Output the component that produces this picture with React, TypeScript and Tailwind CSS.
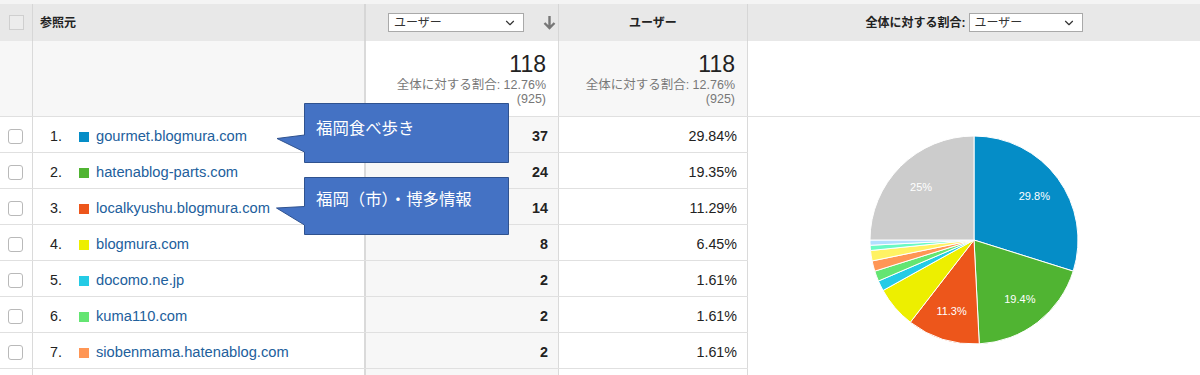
import { ChevronDown } from 'lucide-react';

const rows = [
  { n: 1, name: 'gourmet.blogmura.com', color: '#058dc7', users: '37', pct: '29.84%' },
  { n: 2, name: 'hatenablog-parts.com', color: '#50b432', users: '24', pct: '19.35%' },
  { n: 3, name: 'localkyushu.blogmura.com', color: '#ed561b', users: '14', pct: '11.29%' },
  { n: 4, name: 'blogmura.com', color: '#edef00', users: '8', pct: '6.45%' },
  { n: 5, name: 'docomo.ne.jp', color: '#24cbe5', users: '2', pct: '1.61%' },
  { n: 6, name: 'kuma110.com', color: '#64e572', users: '2', pct: '1.61%' },
  { n: 7, name: 'siobenmama.hatenablog.com', color: '#ff9655', users: '2', pct: '1.61%' },
];

const slices = [
  { v: 37, color: '#058dc7', label: '29.8%' },
  { v: 24, color: '#50b432', label: '19.4%' },
  { v: 14, color: '#ed561b', label: '11.3%' },
  { v: 8, color: '#edef00' },
  { v: 2, color: '#24cbe5' },
  { v: 2, color: '#64e572' },
  { v: 2, color: '#ff9655' },
  { v: 2, color: '#fff263' },
  { v: 1, color: '#6af9c4' },
  { v: 1, color: '#b2deff' },
  { v: 31, color: '#cccccc', label: '25%' },
];

function Select({ width }: { width: string }) {
  return (
    <div className={`${width} h-[19px] bg-white border border-[#a9a9a9] flex items-center justify-between pl-[5px] pr-[6px]`}>
      <span className="text-[12px] leading-none text-[#333]">ユーザー</span>
      <ChevronDown className="w-[14px] h-[14px] text-[#333]" strokeWidth={2} />
    </div>
  );
}

function Pie() {
  const total = slices.reduce((s, x) => s + x.v, 0);
  const cx = 106;
  const cy = 106;
  const r = 104;
  let acc = 0;
  const pt = (frac: number, rad: number) => {
    const a = frac * Math.PI * 2;
    return [cx + Math.sin(a) * rad, cy - Math.cos(a) * rad];
  };
  return (
    <svg width="212" height="212" viewBox="0 0 212 212">
      {slices.map((s, i) => {
        const start = acc / total;
        acc += s.v;
        const end = acc / total;
        const [x1, y1] = pt(start, r);
        const [x2, y2] = pt(end, r);
        const large = end - start > 0.5 ? 1 : 0;
        return (
          <path
            key={i}
            d={`M${cx} ${cy} L${x1} ${y1} A${r} ${r} 0 ${large} 1 ${x2} ${y2} Z`}
            fill={s.color}
            stroke="#ffffff"
            strokeWidth="1"
          />
        );
      })}
      {(() => {
        let a2 = 0;
        return slices.map((s, i) => {
          const mid = (a2 + s.v / 2) / total;
          a2 += s.v;
          if (!s.label) return null;
          const [lx, ly] = pt(mid, r * 0.72);
          return (
            <text
              key={'l' + i}
              x={lx}
              y={ly}
              textAnchor="middle"
              dominantBaseline="central"
              fill="#ffffff"
              fontSize="11"
              fontFamily="Liberation Sans, Arial, sans-serif"
            >
              {s.label}
            </text>
          );
        });
      })()}
    </svg>
  );
}

export default function App() {
  return (
    <div className="relative w-[1200px] h-[375px] overflow-hidden bg-white font-['Liberation_Sans','Noto_Sans_CJK_JP',sans-serif] text-[#222]">
      <div className="h-[4px] bg-[#f4f4f4]"></div>

      {/* Header */}
      <div className="grid grid-cols-[33px_333px_193px_189px_1fr] h-[37px] bg-[#e8e8e8]">
        <div className="border-r border-[#d6d6d6] flex items-center pl-[9px]">
          <div className="w-[15px] h-[15px] border border-[#cfcfcf] bg-[#ececec]"></div>
        </div>
        <div className="border-r-2 border-[#d6d6d6] flex items-center pl-[7px] text-[12px] font-bold">参照元</div>
        <div className="border-r border-[#d6d6d6] flex items-center pl-[22px]">
          <Select width="w-[136px]" />
          <svg className="ml-[19px]" width="13" height="15" viewBox="0 0 13 15">
            <path d="M6.5 1V13M1.5 8L6.5 13L11.5 8" fill="none" stroke="#777" strokeWidth="2.4" />
          </svg>
        </div>
        <div className="border-r border-[#d6d6d6] flex items-center justify-center text-[12px] font-bold">ユーザー</div>
        <div className="flex items-center justify-center">
          <span className="text-[12px] font-bold mr-[3px]">全体に対する割合:</span>
          <Select width="w-[114px]" />
        </div>
      </div>

      {/* Summary */}
      <div className="grid grid-cols-[33px_333px_193px_189px_1fr] h-[76px] border-b border-[#e0e0e0]">
        <div className="border-r border-[#dadada] bg-[#f7f7f7]"></div>
        <div className="border-r-2 border-[#dadada] bg-[#f7f7f7]"></div>
        <div className="border-r border-[#dadada] bg-white flex flex-col items-end pr-[12px] pt-[10px]">
          <span className="text-[23px] leading-[26px] text-[#222]">118</span>
          <span className="text-[12.5px] leading-[14px] text-[#777] mt-[1px]">全体に対する割合: 12.76%</span>
          <span className="text-[12.5px] leading-[14px] text-[#777]">(925)</span>
        </div>
        <div className="border-r border-[#dadada] bg-[#f7f7f7] flex flex-col items-end pr-[12px] pt-[10px]">
          <span className="text-[23px] leading-[26px] text-[#222]">118</span>
          <span className="text-[12.5px] leading-[14px] text-[#777] mt-[1px]">全体に対する割合: 12.76%</span>
          <span className="text-[12.5px] leading-[14px] text-[#777]">(925)</span>
        </div>
        <div className="bg-white"></div>
      </div>

      {/* Body */}
      <div className="flex">
        <div className="w-[748px]">
          {rows.map((r) => (
            <div key={r.n} className="grid grid-cols-[33px_333px_193px_189px] h-[36px] border-b border-[#e0e0e0]">
              <div className="border-r border-[#dadada] flex items-center pl-[8px] pt-[3px]">
                <div className="w-[15px] h-[15px] rounded-[3px] border border-[#b9b9b9] bg-white"></div>
              </div>
              <div className="border-r-2 border-[#dadada] flex items-center pl-[17px] pt-[4px] text-[14.3px]">
                <span className="w-[29px] text-[#222]">{r.n}.</span>
                <span className="w-[10px] h-[10px] mr-[7px]" style={{ backgroundColor: r.color }}></span>
                <span className="text-[14.7px] text-[#22609c]">{r.name}</span>
              </div>
              <div className="border-r border-[#dadada] bg-[#f7f7f7] flex items-center justify-end pr-[10px] pt-[4px] text-[14.3px] font-bold">
                {r.users}
              </div>
              <div className="border-r border-[#dadada] flex items-center justify-end pr-[10px] pt-[4px] text-[14.3px]">
                {r.pct}
              </div>
            </div>
          ))}
          <div className="grid grid-cols-[33px_333px_193px_189px] h-[36px]">
            <div className="border-r border-[#dadada]"></div>
            <div className="border-r-2 border-[#dadada]"></div>
            <div className="border-r border-[#dadada] bg-[#f7f7f7]"></div>
            <div className="border-r border-[#dadada]"></div>
          </div>
        </div>
        <div className="flex-1 flex justify-center pt-[17px]">
          <Pie />
        </div>
      </div>

      {/* Callouts */}
      <div className="absolute left-[276px] top-[103px] w-[234px] h-[61px]">
        <svg className="absolute inset-0" width="234" height="61" viewBox="0 0 234 61">
          <path d="M28.5 0.5H232.5V59.5H28.5V49L1 35.5L28.5 32Z" fill="#4472c4" stroke="#2f528f" strokeWidth="1" />
        </svg>
        <div className="absolute left-[40px] top-[13px] text-[16.4px] leading-[22px] text-white font-['Noto_Sans_CJK_JP',sans-serif]">
          福岡食べ歩き
        </div>
      </div>
      <div className="absolute left-[276px] top-[177px] w-[234px] h-[59px]">
        <svg className="absolute inset-0" width="234" height="59" viewBox="0 0 234 59">
          <path d="M28.5 0.5H232.5V57.5H28.5V48L0.5 31L28.5 29.5Z" fill="#4472c4" stroke="#2f528f" strokeWidth="1" />
        </svg>
        <div className="absolute left-[40px] top-[10px] text-[16.4px] leading-[22px] text-white font-['Noto_Sans_CJK_JP',sans-serif]">
          福岡（市）・博多情報
        </div>
      </div>
    </div>
  );
}
